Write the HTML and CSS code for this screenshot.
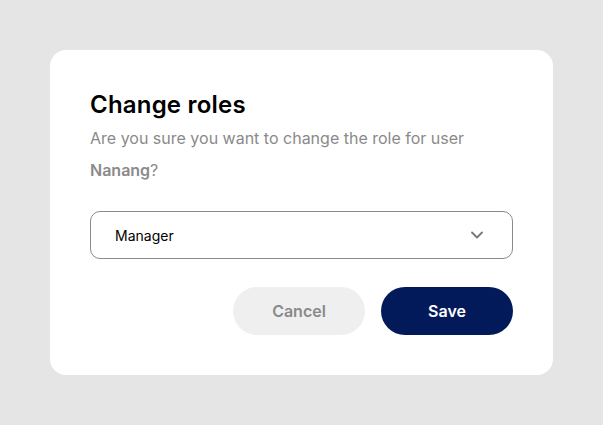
FILE: index.html
```html
<!DOCTYPE html>
<html>
<head>
<meta charset="utf-8">
<link rel="stylesheet" href="styles.css">
</head>
<body>
<div class="card">
  <h1 class="title">Change roles</h1>
  <p class="desc">Are you sure you want to change the role for user <b>Nanang</b>?</p>
  <div class="select">
    <span>Manager</span>
    <svg class="chev" width="12" height="8" viewBox="0 0 12 8"><path d="M1 1.5 L6 6.5 L11 1.5" fill="none" stroke="#777" stroke-width="1.8" stroke-linecap="round" stroke-linejoin="round"/></svg>
  </div>
  <div class="actions">
    <button class="btn cancel">Cancel</button>
    <button class="btn save">Save</button>
  </div>
</div>
</body>
</html>
```
FILE: styles.css
```css
html, body { margin: 0; padding: 0; }
body {
  background: #e5e5e5;
  width: 603px;
  height: 425px;
  font-family: Inter, "Noto Sans", sans-serif;
  padding: 50px;
  box-sizing: border-box;
}
.card {
  background: #fff;
  border-radius: 16px;
  width: 503px;
  height: 325px;
  box-sizing: border-box;
  padding: 40px;
}
.title {
  margin: 0;
  font-size: 24px;
  line-height: 30px;
  font-weight: 600;
  letter-spacing: 0.2px;
  color: #000;
}
.desc {
  margin: 2px 0 0;
  font-size: 16px;
  line-height: 32px;
  color: #8a8a8a;
}
.desc b { font-weight: 600; }
.select {
  margin-top: 25px;
  height: 48px;
  border: 1px solid #8a8a8a;
  border-radius: 10px;
  box-sizing: border-box;
  display: flex;
  align-items: center;
  justify-content: space-between;
  padding: 0 29px 0 24px;
  font-size: 14px;
  color: #000;
}
.chev { display: block; }
.actions {
  margin-top: 28px;
  display: flex;
  justify-content: flex-end;
  gap: 16px;
}
.btn {
  width: 132px;
  height: 48px;
  border: none;
  border-radius: 24px;
  font-family: Inter, "Noto Sans", sans-serif;
  font-size: 16px;
  font-weight: 600;
}
.cancel { background: #efefef; color: #8a8a8a; }
.save { background: #031a5a; color: #fff; }
```
